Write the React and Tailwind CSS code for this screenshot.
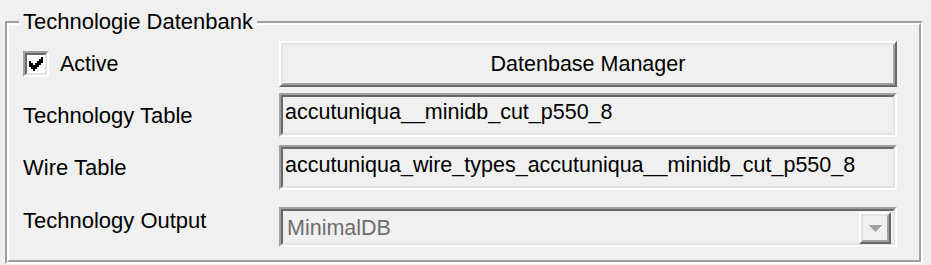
import React from "react";

function Sunken({ className = "", children }) {
  return (
    <div className={`border-2 border-t-[#a0a0a0] border-l-[#a0a0a0] border-r-white border-b-white ${className}`}>
      <div className="h-full border-2 border-t-[#696969] border-l-[#696969] border-r-[#e3e3e3] border-b-[#e3e3e3]">
        {children}
      </div>
    </div>
  );
}

function Raised({ className = "", children }) {
  return (
    <div className={`border-2 border-t-white border-l-white border-r-[#696969] border-b-[#696969] ${className}`}>
      <div className="h-full border-2 border-t-[#e3e3e3] border-l-[#e3e3e3] border-r-[#a0a0a0] border-b-[#a0a0a0]">
        {children}
      </div>
    </div>
  );
}

function CheckMark() {
  // classic 7x7 tick, drawn 2x
  const cols = [2, 3, 4, 3, 2, 1, 0];
  return (
    <svg width="14" height="14" viewBox="0 0 7 7" shapeRendering="crispEdges">
      {cols.map((y, x) => (
        <rect key={x} x={x} y={y} width="1" height="3" fill="#000" />
      ))}
    </svg>
  );
}

export default function App() {
  return (
    <div className="w-[931px] h-[265px] bg-[#f0f0f0] pt-[21px] pl-[5px] font-['Liberation_Sans',Arial,sans-serif] text-[21.5px] leading-[24px] text-black">
      <div className="relative w-[918px] h-[243px] border-2 border-t-[#a0a0a0] border-l-[#a0a0a0] border-r-white border-b-white">
        <div className="h-full border-2 border-t-white border-l-white border-r-[#a0a0a0] border-b-[#a0a0a0] pl-[14px] pr-[22px] pt-[16px]">
          <div className="grid grid-cols-[256px_1fr]">
            {/* Active + manager button */}
            <div className="flex items-center gap-[11px] h-[46px]">
              <Sunken className="w-[26px] h-[26px]">
                <div className="h-full bg-white flex items-center justify-center">
                  <CheckMark />
                </div>
              </Sunken>
              <span>Active</span>
            </div>
            <Raised className="h-[46px]">
              <div className="h-full flex items-center justify-center">Datenbase Manager</div>
            </Raised>

            {/* Technology table */}
            <div className="mt-[6px] pt-[11px] text-[22px]">Technology Table</div>
            <Sunken className="mt-[6px] h-[44px]">
              <div className="pt-[3px] pl-[2px] whitespace-nowrap">accutuniqua__minidb_cut_p550_8</div>
            </Sunken>

            {/* Wire table */}
            <div className="mt-[8px] pt-[11px] text-[22px]">Wire Table</div>
            <Sunken className="mt-[8px] h-[45px]">
              <div className="pt-[4px] pl-[2px] whitespace-nowrap">accutuniqua_wire_types_accutuniqua__minidb_cut_p550_8</div>
            </Sunken>

            {/* Output */}
            <div className="mt-[17px] pt-[2px] text-[22px]">Technology Output</div>
            <Sunken className="mt-[17px] h-[40px]">
              <div className="h-full flex">
                <div className="flex-1 pt-[5px] pl-[4px] text-[#6d6d6d]">MinimalDB</div>
                <Raised className="w-[32px] h-[32px] mt-[1px] mr-[2px]">
                  <div className="h-full flex items-center justify-center">
                    <svg width="16" height="9" viewBox="0 0 16 9" shapeRendering="crispEdges">
                      <polygon points="2,2 16,2 9,9" fill="#ffffff" />
                      <polygon points="1,1 15,1 8,8" fill="#a0a0a0" />
                    </svg>
                  </div>
                </Raised>
              </div>
            </Sunken>
          </div>
        </div>
        <div className="absolute left-[12px] top-[-13px] bg-[#f0f0f0] px-[4px] whitespace-nowrap text-[22px]">
          Technologie Datenbank
        </div>
      </div>
    </div>
  );
}
